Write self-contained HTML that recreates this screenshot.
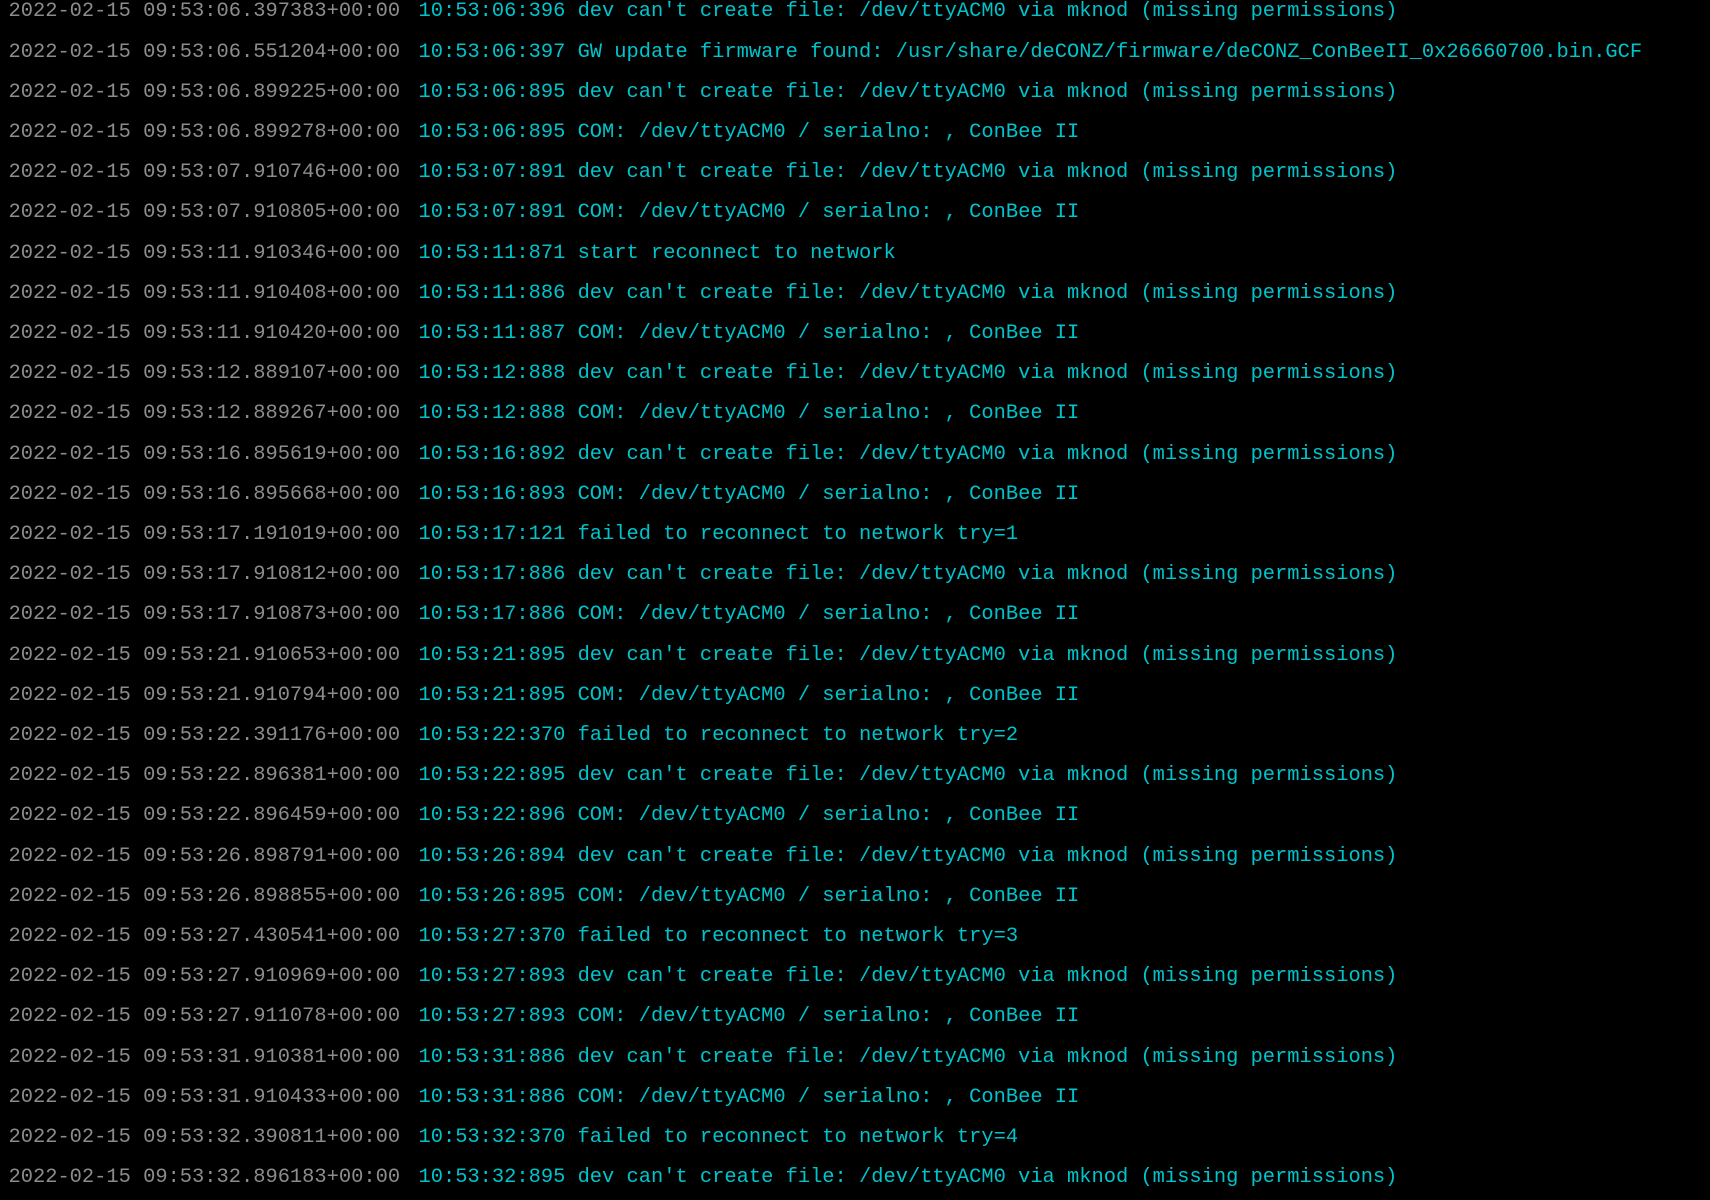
<!DOCTYPE html>
<html><head><meta charset="utf-8"><style>
html,body{margin:0;padding:0;background:#000;width:1710px;height:1200px;overflow:hidden}
pre{margin:0;position:absolute;left:8.5px;top:-7.6px;font-family:"Liberation Mono",monospace;font-size:20.4px;line-height:40.2px;color:#00c4cc;white-space:pre}
.g{color:#8c8c8c;display:inline-block;width:410px}
</style></head><body><pre><span class="g">2022-02-15 09:53:06.397383+00:00</span>10:53:06:396 dev can't create file: /dev/ttyACM0 via mknod (missing permissions)
<span class="g">2022-02-15 09:53:06.551204+00:00</span>10:53:06:397 GW update firmware found: /usr/share/deCONZ/firmware/deCONZ_ConBeeII_0x26660700.bin.GCF
<span class="g">2022-02-15 09:53:06.899225+00:00</span>10:53:06:895 dev can't create file: /dev/ttyACM0 via mknod (missing permissions)
<span class="g">2022-02-15 09:53:06.899278+00:00</span>10:53:06:895 COM: /dev/ttyACM0 / serialno: , ConBee II
<span class="g">2022-02-15 09:53:07.910746+00:00</span>10:53:07:891 dev can't create file: /dev/ttyACM0 via mknod (missing permissions)
<span class="g">2022-02-15 09:53:07.910805+00:00</span>10:53:07:891 COM: /dev/ttyACM0 / serialno: , ConBee II
<span class="g">2022-02-15 09:53:11.910346+00:00</span>10:53:11:871 start reconnect to network
<span class="g">2022-02-15 09:53:11.910408+00:00</span>10:53:11:886 dev can't create file: /dev/ttyACM0 via mknod (missing permissions)
<span class="g">2022-02-15 09:53:11.910420+00:00</span>10:53:11:887 COM: /dev/ttyACM0 / serialno: , ConBee II
<span class="g">2022-02-15 09:53:12.889107+00:00</span>10:53:12:888 dev can't create file: /dev/ttyACM0 via mknod (missing permissions)
<span class="g">2022-02-15 09:53:12.889267+00:00</span>10:53:12:888 COM: /dev/ttyACM0 / serialno: , ConBee II
<span class="g">2022-02-15 09:53:16.895619+00:00</span>10:53:16:892 dev can't create file: /dev/ttyACM0 via mknod (missing permissions)
<span class="g">2022-02-15 09:53:16.895668+00:00</span>10:53:16:893 COM: /dev/ttyACM0 / serialno: , ConBee II
<span class="g">2022-02-15 09:53:17.191019+00:00</span>10:53:17:121 failed to reconnect to network try=1
<span class="g">2022-02-15 09:53:17.910812+00:00</span>10:53:17:886 dev can't create file: /dev/ttyACM0 via mknod (missing permissions)
<span class="g">2022-02-15 09:53:17.910873+00:00</span>10:53:17:886 COM: /dev/ttyACM0 / serialno: , ConBee II
<span class="g">2022-02-15 09:53:21.910653+00:00</span>10:53:21:895 dev can't create file: /dev/ttyACM0 via mknod (missing permissions)
<span class="g">2022-02-15 09:53:21.910794+00:00</span>10:53:21:895 COM: /dev/ttyACM0 / serialno: , ConBee II
<span class="g">2022-02-15 09:53:22.391176+00:00</span>10:53:22:370 failed to reconnect to network try=2
<span class="g">2022-02-15 09:53:22.896381+00:00</span>10:53:22:895 dev can't create file: /dev/ttyACM0 via mknod (missing permissions)
<span class="g">2022-02-15 09:53:22.896459+00:00</span>10:53:22:896 COM: /dev/ttyACM0 / serialno: , ConBee II
<span class="g">2022-02-15 09:53:26.898791+00:00</span>10:53:26:894 dev can't create file: /dev/ttyACM0 via mknod (missing permissions)
<span class="g">2022-02-15 09:53:26.898855+00:00</span>10:53:26:895 COM: /dev/ttyACM0 / serialno: , ConBee II
<span class="g">2022-02-15 09:53:27.430541+00:00</span>10:53:27:370 failed to reconnect to network try=3
<span class="g">2022-02-15 09:53:27.910969+00:00</span>10:53:27:893 dev can't create file: /dev/ttyACM0 via mknod (missing permissions)
<span class="g">2022-02-15 09:53:27.911078+00:00</span>10:53:27:893 COM: /dev/ttyACM0 / serialno: , ConBee II
<span class="g">2022-02-15 09:53:31.910381+00:00</span>10:53:31:886 dev can't create file: /dev/ttyACM0 via mknod (missing permissions)
<span class="g">2022-02-15 09:53:31.910433+00:00</span>10:53:31:886 COM: /dev/ttyACM0 / serialno: , ConBee II
<span class="g">2022-02-15 09:53:32.390811+00:00</span>10:53:32:370 failed to reconnect to network try=4
<span class="g">2022-02-15 09:53:32.896183+00:00</span>10:53:32:895 dev can't create file: /dev/ttyACM0 via mknod (missing permissions)</pre></body></html>
